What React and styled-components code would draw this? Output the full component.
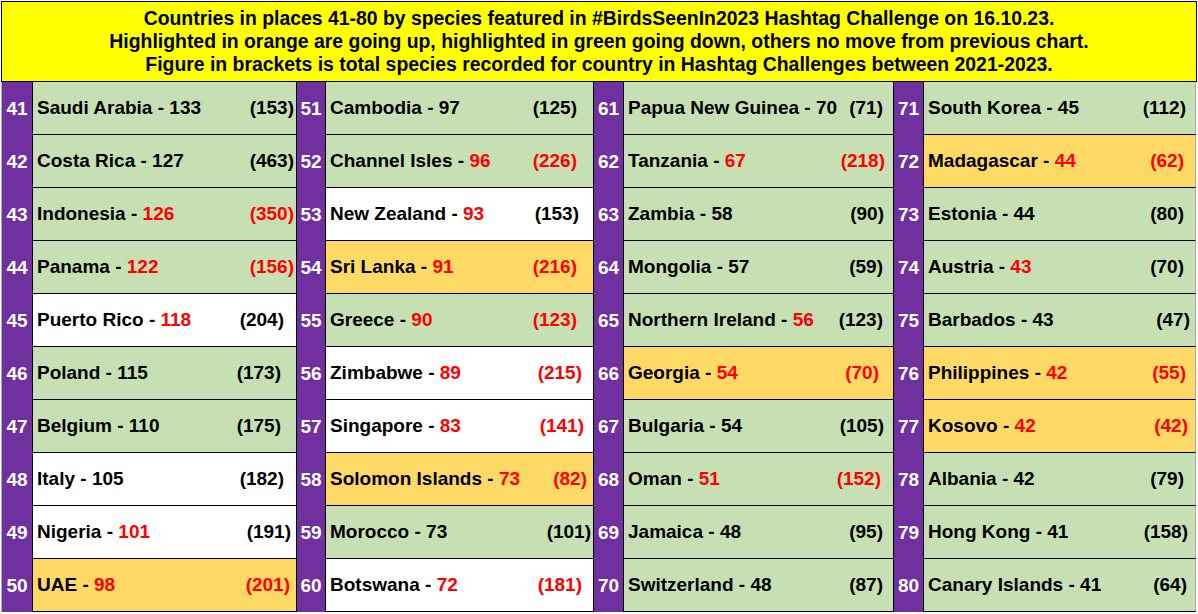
import React from 'react'
import styled, { createGlobalStyle } from 'styled-components'

const GlobalStyle = createGlobalStyle`
  html, body {
    margin: 0;
    padding: 0;
    background: #fff;
  }
  body {
    font-family: "Liberation Sans", Arial, sans-serif;
  }
`

const BG = { g: '#c6e0b4', o: '#ffd966', w: '#ffffff' }

// rank, name, count, count red?, total, total red?, background, right pad
const rows = [
  [41, 'Saudi Arabia', 133, 0, 153, 0, 'g', 2],
  [42, 'Costa Rica', 127, 0, 463, 0, 'g', 2],
  [43, 'Indonesia', 126, 1, 350, 1, 'g', 2],
  [44, 'Panama', 122, 1, 156, 1, 'g', 2],
  [45, 'Puerto Rico', 118, 1, 204, 0, 'w', 12],
  [46, 'Poland', 115, 0, 173, 0, 'g', 15],
  [47, 'Belgium', 110, 0, 175, 0, 'g', 15],
  [48, 'Italy', 105, 0, 182, 0, 'w', 12],
  [49, 'Nigeria', 101, 1, 191, 0, 'w', 5],
  [50, 'UAE', 98, 1, 201, 1, 'o', 6],
  [51, 'Cambodia', 97, 0, 125, 0, 'g', 16],
  [52, 'Channel Isles', 96, 1, 226, 1, 'g', 16],
  [53, 'New Zealand', 93, 1, 153, 0, 'w', 14],
  [54, 'Sri Lanka', 91, 1, 216, 1, 'o', 16],
  [55, 'Greece', 90, 1, 123, 1, 'g', 16],
  [56, 'Zimbabwe', 89, 1, 215, 1, 'w', 11],
  [57, 'Singapore', 83, 1, 141, 1, 'w', 9],
  [58, 'Solomon Islands', 73, 1, 82, 1, 'o', 6],
  [59, 'Morocco', 73, 0, 101, 0, 'g', 2],
  [60, 'Botswana', 72, 1, 181, 1, 'w', 11],
  [61, 'Papua New Guinea', 70, 0, 71, 0, 'g', 10],
  [62, 'Tanzania', 67, 1, 218, 1, 'g', 8],
  [63, 'Zambia', 58, 0, 90, 0, 'g', 9],
  [64, 'Mongolia', 57, 0, 59, 0, 'g', 10],
  [65, 'Northern Ireland', 56, 1, 123, 0, 'g', 10],
  [66, 'Georgia', 54, 1, 70, 1, 'o', 14],
  [67, 'Bulgaria', 54, 0, 105, 0, 'g', 9],
  [68, 'Oman', 51, 1, 152, 1, 'g', 12],
  [69, 'Jamaica', 48, 0, 95, 0, 'g', 10],
  [70, 'Switzerland', 48, 0, 87, 0, 'g', 10],
  [71, 'South Korea', 45, 0, 112, 0, 'g', 9],
  [72, 'Madagascar', 44, 1, 62, 1, 'o', 11],
  [73, 'Estonia', 44, 0, 80, 0, 'g', 11],
  [74, 'Austria', 43, 1, 70, 0, 'g', 11],
  [75, 'Barbados', 43, 0, 47, 0, 'g', 5],
  [76, 'Philippines', 42, 1, 55, 1, 'o', 9],
  [77, 'Kosovo', 42, 1, 42, 1, 'o', 7],
  [78, 'Albania', 42, 0, 79, 0, 'g', 11],
  [79, 'Hong Kong', 41, 0, 158, 0, 'g', 7],
  [80, 'Canary Islands', 41, 0, 64, 0, 'g', 8],
]

const Page = styled.div`
  width: 1198px;
  height: 614px;
  padding: 1px 0 0 1px;
  box-sizing: border-box;
  overflow: hidden;
`

const Header = styled.div`
  width: 1196px;
  height: 81px;
  box-sizing: border-box;
  border: 1px solid #000;
  background: #ffff00;
  display: flex;
  flex-direction: column;
  justify-content: center;
  align-items: center;
  font-weight: bold;
  font-size: 19.4px;
  line-height: 23px;
  color: #000;
  padding-bottom: 1px;
  white-space: nowrap;
`

const Grid = styled.div`
  display: grid;
  grid-template-columns: 31px 264px 29px 268px 30px 270px 30px 272px;
  grid-template-rows: repeat(10, 53px);
  border-left: 1px solid #9fb894;
  width: 1195px;
`

const Rank = styled.div`
  background: #7030a0;
  border-right: 1px solid #000;
  box-sizing: border-box;
  color: #fff;
  font-weight: bold;
  font-size: 19px;
  display: flex;
  align-items: center;
  justify-content: center;
  padding-top: 1px;
`

const Cell = styled.div`
  background: ${p => BG[p.$bg]};
  border-right: 1px solid ${p => (p.$last ? '#a6a6a6' : '#000')};
  border-bottom: 1px solid #000;
  box-sizing: border-box;
  display: flex;
  align-items: center;
  justify-content: space-between;
  padding: 0 ${p => p.$pad}px 0 4px;
  font-weight: bold;
  font-size: 19px;
  color: #000;
  white-space: nowrap;
`

const Num = styled.span`
  color: ${p => (p.$red ? '#ff0000' : '#000')};
`

export default function App() {
  return (
    <Page>
      <GlobalStyle />
      <Header>
        <div>Countries in places 41-80 by species featured in #BirdsSeenIn2023 Hashtag Challenge on 16.10.23.</div>
        <div>Highlighted in orange are going up, highlighted in green going down, others no move from previous chart.</div>
        <div>Figure in brackets is total species recorded for country in Hashtag Challenges between 2021-2023.</div>
      </Header>
      <Grid>
        {rows.map(([rank, name, count, cRed, total, tRed, bg, pad], i) => {
          const group = Math.floor(i / 10)
          const place = { gridRow: (i % 10) + 1 }
          return (
            <React.Fragment key={rank}>
              <Rank style={{ ...place, gridColumn: group * 2 + 1 }}>{rank}</Rank>
              <Cell $bg={bg} $pad={pad} $last={group === 3} style={{ ...place, gridColumn: group * 2 + 2 }}>
                <span>
                  {name} - <Num $red={cRed}>{count}</Num>
                </span>
                <Num $red={tRed}>({total})</Num>
              </Cell>
            </React.Fragment>
          )
        })}
      </Grid>
    </Page>
  )
}
